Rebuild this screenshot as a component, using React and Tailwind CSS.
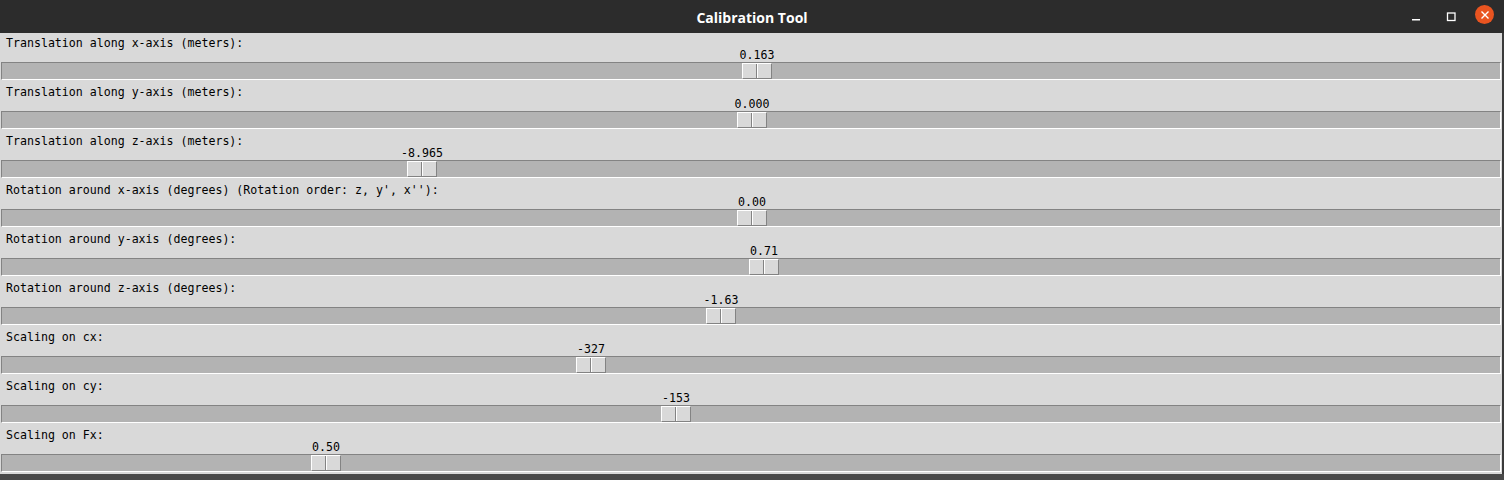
import React from "react";

const rows = [
  { label: "Translation along x-axis (meters):", value: "0.163", x: 742 },
  { label: "Translation along y-axis (meters):", value: "0.000", x: 737 },
  { label: "Translation along z-axis (meters):", value: "-8.965", x: 407 },
  { label: "Rotation around x-axis (degrees) (Rotation order: z, y', x''):", value: "0.00", x: 737 },
  { label: "Rotation around y-axis (degrees):", value: "0.71", x: 749 },
  { label: "Rotation around z-axis (degrees):", value: "-1.63", x: 706 },
  { label: "Scaling on cx:", value: "-327", x: 576 },
  { label: "Scaling on cy:", value: "-153", x: 661 },
  { label: "Scaling on Fx:", value: "0.50", x: 311 },
];

function SliderRow({ label, value, x }) {
  return (
    <div className="h-[49px] pt-[3px]">
      <div className="h-[14px] leading-[14px] pl-[6px] whitespace-pre">{label}</div>
      <div className="relative h-[12px]">
        <div
          className="absolute top-[-2px] leading-[14px] -translate-x-1/2 whitespace-pre"
          style={{ left: x + 15 }}
        >
          {value}
        </div>
      </div>
      <div className="relative ml-[1px] w-[1500px] h-[18px] bg-[#b3b3b3] border border-t-[#838383] border-l-[#838383] border-b-white border-r-white">
        <div
          className="absolute top-0 h-[16px] w-[30px] flex bg-[#d9d9d9] border border-t-white border-l-white border-b-[#838383] border-r-[#838383]"
          style={{ left: x - 2 }}
        >
          <div className="w-[13px]" />
          <div className="w-[1px] bg-[#838383]" />
          <div className="w-[1px] bg-white" />
        </div>
      </div>
    </div>
  );
}

export default function App() {
  return (
    <div className="w-[1504px] h-[480px] overflow-hidden bg-[#4a4a4a] flex flex-col">
      <div className="h-[33px] bg-[#2c2c2c] grid grid-cols-[1fr_auto_1fr] items-center">
        <div />
        <div
          className="text-white font-bold text-[14px] leading-[33px] pt-[1px]"
          style={{ fontFamily: '"Open Sans", "DejaVu Sans", sans-serif' }}
        >
          Calibration Tool
        </div>
        <div className="flex justify-end items-center pr-[10px]">
          <svg width="10" height="10" viewBox="0 0 10 10" className="mr-[25px] mt-[2px]">
            <rect x="1" y="6" width="8" height="1.5" fill="white" />
          </svg>
          <svg width="10" height="10" viewBox="0 0 10 10" className="mr-[19px]">
            <rect x="1.5" y="1" width="7.5" height="7.5" fill="none" stroke="white" strokeWidth="1.3" />
          </svg>
          <div className="w-[19px] h-[19px] rounded-full bg-[#e95420] flex items-center justify-center mt-[-5px]">
            <svg width="10" height="10" viewBox="0 0 10 10">
              <path d="M1.5 1.5 L8.5 8.5 M8.5 1.5 L1.5 8.5" stroke="white" strokeWidth="1.4" />
            </svg>
          </div>
        </div>
      </div>
      <div className="flex">
        <div
          className="w-[1502px] h-[441px] bg-[#d9d9d9] text-black text-[11.6px]"
          style={{ fontFamily: '"DejaVu Sans Mono", "Liberation Mono", monospace' }}
        >
          {rows.map((r) => (
            <SliderRow key={r.label} {...r} />
          ))}
        </div>
        <div className="w-[2px] bg-[#3a3a3a]" />
      </div>
    </div>
  );
}
